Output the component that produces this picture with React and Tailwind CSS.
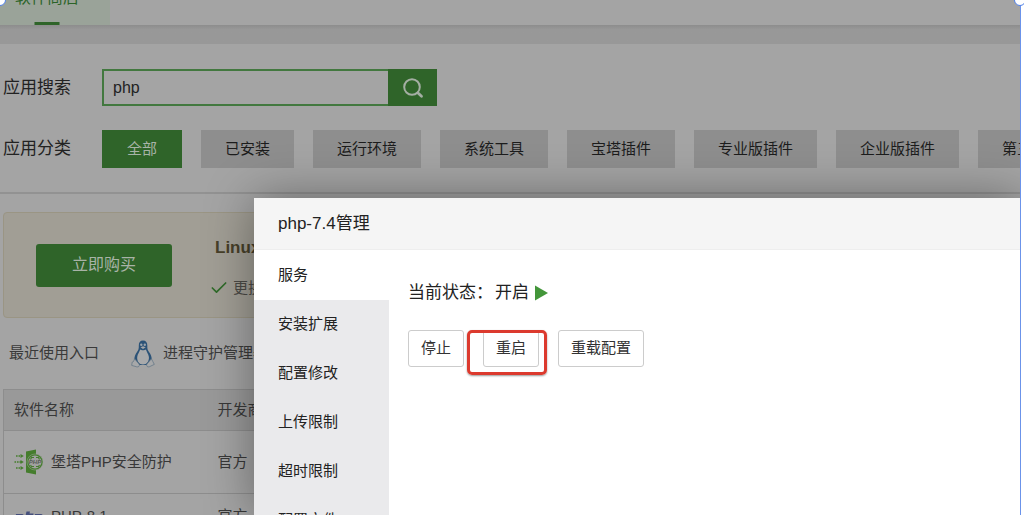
import React from 'react'
import { Check } from 'lucide-react'

const categories = ['全部', '已安装', '运行环境', '系统工具', '宝塔插件', '专业版插件', '企业版插件', '第三方应用']
const menu = ['服务', '安装扩展', '配置修改', '上传限制', '超时限制', '配置文件']

function SearchIcon() {
  return (
    <svg viewBox="0 0 22 22" className="w-[22px] h-[22px]" fill="none" stroke="currentColor" strokeLinecap="round">
      <circle cx="10" cy="10" r="7.800" strokeWidth="2" />
      <path d="M16 16l3.500 3.300" strokeWidth="2.800" />
    </svg>
  )
}

function TuxIcon() {
  return (
    <svg viewBox="0 0 24 28" className="w-6 h-7 shrink-0">
      <path d="M12 0.500c-3 0-4.300 2-4.200 5 .1 3-.3 4.600-1.800 6.500C4.300 14.300 3.200 17 3.400 20l2.600 5h12l2.700-5c.2-3-.9-5.700-2.700-8-1.500-1.900-1.800-3.500-1.700-6.500.1-3-1.300-5-4.300-5z" fill="#2b5277" />
      <path d="M9.200 9.500c.8 1 4.800 1 5.700 0 .5 2 2.600 4.500 3 7.500.4 4-2 7.500-5.900 7.500S5.800 21 6.200 17c.3-3 2.500-5.500 3-7.500z" fill="#a9aaab" />
      <circle cx="10.300" cy="4.800" r="1.200" fill="#9aa3ab" />
      <circle cx="13.800" cy="4.800" r="1.200" fill="#9aa3ab" />
      <path d="M9.500 7.200l2.500-1 2.700 1-2.700 1.700z" fill="#a5a6a7" />
      <path d="M3.600 18.800l4.600 5.400c.6 1.800-.6 3-2.300 2.700L.7 25.400c.4-1.500.1-2.300.5-3.300l1.300-.6zM20.400 18.800l-4.600 5.400c-.6 1.800.6 3 2.300 2.700l5.200-2.500-1.500-2.900z" fill="#a7a8a9" stroke="#5f7384" strokeWidth="0.700" />
    </svg>
  )
}

function PhpGuardIcon() {
  return (
    <svg viewBox="0 0 30 26" className="w-[30px] h-[26px] shrink-0">
      <path d="M12 2.500L22 0.500v25l-10-2z" fill="#457d2d" />
      <circle cx="21" cy="13" r="8" fill="#457d2d" stroke="#a0a0a0" strokeWidth="0.500" />
      <circle cx="21" cy="13" r="6.500" fill="#a0a0a0" />
      <path d="M20 8.500h-2.500l-1 2M22 8.500h2.500l1 2M20 17.500h-2.500l-1-1.500M22 17.500h2.500l1-1.500" fill="none" stroke="#457d2d" strokeWidth="1.200" />
      <text x="21" y="15.200" textAnchor="middle" fontSize="6" fontWeight="700" fontStyle="italic" fill="#555b55">PHP</text>
      <path d="M2 7h5M0.500 13h6.500M2 19h5" stroke="#457d2d" strokeWidth="1.400" strokeDasharray="1.600 0.900" />
      <path d="M6.500 5l3.300 2-3.300 2zM6.500 11l3.300 2-3.300 2zM6.500 17l3.300 2-3.300 2z" fill="#457d2d" />
    </svg>
  )
}

function PhpIcon() {
  return (
    <svg viewBox="0 0 30 26" className="w-[30px] h-[26px] shrink-0">
      <path d="M12.500 7.500h3.500l-.5 2h4l-1.500 9h-3l1-6h-2l-1 6h-3z" fill="#454f7c" />
      <path d="M2 10h6c3 0 2.500 6-1.500 6H4l-.5 3H.5zM21 10h6c3 0 2.500 6-1.500 6H23l-.5 3h-3z" fill="#454f7c" />
    </svg>
  )
}

function StorePage() {
  return (
    <div className="text-[15px] text-[#333]">
      {/* Top tabs, scrolled partly out of view */}
      <nav className="-mt-[30px] h-[56px] border-b border-[#8e8e8e] flex">
        <a href="#store" className="relative -ml-4 px-[31px] flex items-center text-base text-[#2b6428] bg-[#9aa399]">
          软件商店
          <span className="absolute bottom-0 left-1/2 -translate-x-1/2 w-[25px] h-[3px] bg-[#2f6429]" />
        </a>
      </nav>
      <div className="h-[18px] bg-linear-to-b from-[#8f8f8f] via-[#989898] via-20% to-[#989898]" />

      <div className="pt-[25px] pl-[3px]">
        <div className="flex items-center">
          <label htmlFor="search" className="w-[99px] shrink-0 text-[17px] text-[#222]">应用搜索</label>
          <div className="flex h-[37px]">
            <input id="search" defaultValue="php" className="w-[286px] px-[9px] border-2 border-r-0 border-[#42783f] text-base text-[#222] outline-none" />
            <button aria-label="搜索" className="w-[49px] bg-[#2f6429] flex items-center justify-center text-[#a4aea3]">
              <SearchIcon />
            </button>
          </div>
        </div>

        <div className="flex items-center mt-6">
          <span className="w-[99px] shrink-0 text-[17px] text-[#222]">应用分类</span>
          <div className="flex gap-[19px]">
            {categories.map((name, i) => (
              <button
                key={name}
                className={`h-[38px] px-6 min-w-20 shrink-0 whitespace-nowrap ${i === 0 ? 'bg-[#2f6429] text-[#a8b3a7]' : 'bg-[#8e8e8e] text-[#1c1c1c]'}`}
              >
                {name}
              </button>
            ))}
          </div>
        </div>
      </div>

      <hr className="mt-6 border-t-2 border-[#929292]" />

      <div className="pl-[3px]">
        {/* Upgrade banner */}
        <div className="mt-[18px] h-[106px] pl-8 flex items-center gap-[43px] rounded border border-[#9a9584] bg-[#a19e95]">
          <button className="w-[136px] h-[43px] rounded-[3px] bg-[#2f6429] text-base text-[#a8b3a7]">立即购买</button>
          <div className="pt-1.5 whitespace-nowrap">
            <div className="text-[17px] leading-6 font-bold text-[#474029]">Linux面板</div>
            <div className="mt-4 -ml-1.5 flex items-center gap-1 leading-6 text-[#4b4a46]">
              <Check size={20} className="text-[#2f6b29]" />
              更换授权IP
            </div>
          </div>
        </div>

        <div className="h-[71px] pl-1.5 flex items-center whitespace-nowrap text-[#3a3a3a]">
          <span className="w-[122px]">最近使用入口</span>
          <a href="#supervisor" className="flex items-center gap-2">
            <TuxIcon />
            进程守护管理器
          </a>
        </div>

        <table className="w-full table-fixed border border-[#8d8d8d] text-left text-[#383838]">
          <thead>
            <tr className="h-[41px] bg-[#999] border-b border-[#8d8d8d]">
              <th className="w-[204px] pl-2.5 font-normal">软件名称</th>
              <th className="pl-2.5 font-normal">开发商</th>
            </tr>
          </thead>
          <tbody>
            <tr className="h-[63px] border-b border-[#8d8d8d]">
              <td className="pl-2.5">
                <div className="flex items-center gap-[7px]"><PhpGuardIcon />堡塔PHP安全防护</div>
              </td>
              <td className="pl-2.5">官方</td>
            </tr>
            <tr className="h-[46px]">
              <td className="pl-2.5">
                <div className="flex items-center gap-[7px]"><PhpIcon />PHP-8.1</div>
              </td>
              <td className="pl-2.5">官方</td>
            </tr>
          </tbody>
        </table>
      </div>
    </div>
  )
}

function ManageDialog() {
  return (
    <div
      role="dialog"
      aria-labelledby="dialog-title"
      className="absolute left-[254px] right-0 top-[198px] bottom-0 flex flex-col bg-white text-[15px] text-[#222] rounded-tl-[2px] shadow-[1px_1px_50px_rgba(0,0,0,0.4)]"
    >
      <h2 id="dialog-title" className="h-[52px] shrink-0 px-6 flex items-center text-[17px] bg-[#f5f5f5] border-b border-[#eee]">
        php-7.4管理
      </h2>
      <div className="flex flex-1 min-h-0 overflow-hidden">
        <nav className="w-[135px] shrink-0 bg-[#eaeaec]">
          {menu.map((item, i) => (
            <a key={item} href="#menu" className={`flex items-center pl-6 ${i === 0 ? 'h-[50px] bg-white' : 'h-[49px]'}`}>
              {item}
            </a>
          ))}
        </nav>
        <div className="flex-1 pl-[19px] pt-[31px]">
          <p className="flex items-center gap-0.5 text-[17px] leading-6">
            <span>当前状态：</span>
            <span>开启</span>
            <svg viewBox="0 0 13 16" className="ml-1 w-[13px] h-4">
              <path d="M0 0.500L13 8 0 15.500z" fill="#43963a" />
            </svg>
          </p>
          <div className="mt-[25px] flex gap-[19px] text-[#333]">
            <button className="h-[37px] px-3 border border-[#ccc] rounded-[3px]">停止</button>
            <div className="relative">
              <button className="h-[37px] px-3 border border-[#ccc] rounded-[3px]">重启</button>
              <span className="absolute -left-4 -right-2 top-0 -bottom-2 border-3 border-[#dc3a2e] rounded-[5px] shadow-[0_1px_2px_rgba(0,0,0,0.4)]" />
            </div>
            <button className="h-[37px] px-3 border border-[#ccc] rounded-[3px]">重载配置</button>
          </div>
        </div>
      </div>
    </div>
  )
}

export default function App() {
  return (
    <div className="relative h-screen overflow-hidden bg-white pr-[3px] font-['Liberation_Sans','Noto_Sans_CJK_SC',sans-serif]">
      <div className="relative h-full overflow-hidden bg-[#a4a4a4] border-r border-[#6b93ea]">
        <StorePage />
        <ManageDialog />
      </div>
      {/* Selection handles */}
      <span className="absolute -left-1.5 -top-1.5 size-3 rounded-full bg-white border border-[#4f80e8]" />
      <span className="absolute -right-0.5 -top-1.5 size-3 rounded-full bg-white border border-[#4f80e8]" />
    </div>
  )
}
